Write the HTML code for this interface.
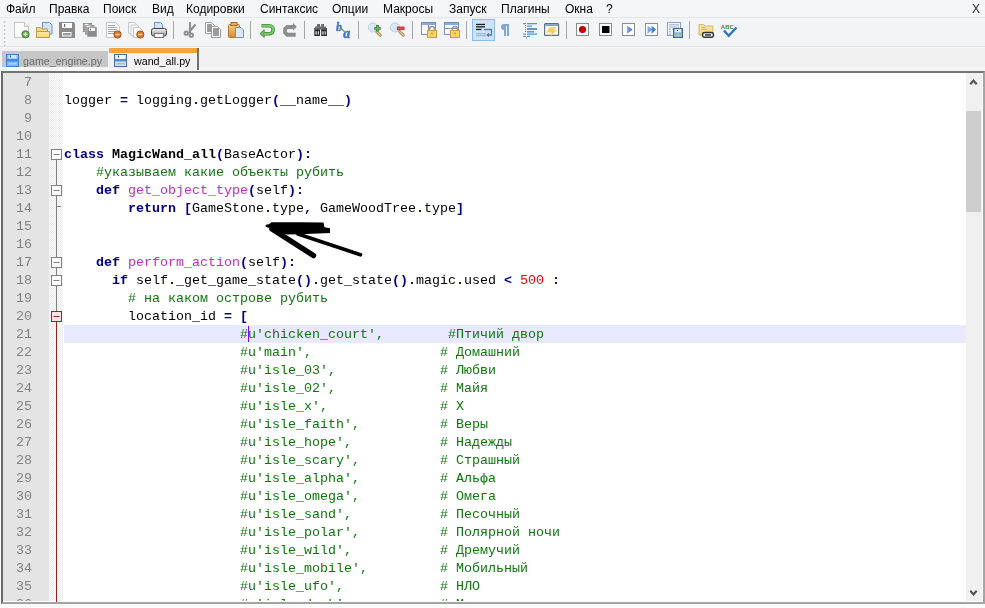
<!DOCTYPE html>
<html><head><meta charset="utf-8">
<style>
*{margin:0;padding:0;box-sizing:border-box}
html,body{width:985px;height:608px;overflow:hidden;background:#fbfbfb;font-family:"Liberation Sans",sans-serif;position:relative}
.a{position:absolute}
#menu{left:0;top:0;width:985px;height:18px;background:#f5f6f7;border-bottom:1px solid #e4e5e7}
#menu span{position:absolute;will-change:transform;top:2px;font-size:12px;color:#000;white-space:pre;line-height:14px}
#tool{left:0;top:18px;width:985px;height:29px;background:#f3f4f6;border-bottom:1px solid #e2e3e5}
#tabs{left:0;top:47px;width:985px;height:24px;background:#f0f0f0}
#frame{left:1px;top:71px;width:984px;height:533px;border-style:solid;border-width:2px;border-color:#747474 #a4a4a4 #a4a4a4 #6a6a6a;background:#fff;overflow:hidden}
#ln{left:0;top:0;width:46px;height:529px;background:#e4e4e4}
#fold{left:46px;top:0;width:14px;height:529px;background-color:#f8f8f8;background-image:conic-gradient(#ececec 25%,#fcfcfc 0 50%,#ececec 0 75%,#fcfcfc 0);background-size:2px 2px}
#sb{left:963px;top:0;width:16px;height:529px;background:#f0f0f0}
.code{position:absolute;will-change:transform;left:61px;height:18px;line-height:18px;font-family:"Liberation Mono",monospace;font-size:13.333px;white-space:pre;color:#000}
.num{position:absolute;will-change:transform;left:0;width:29px;text-align:right;height:18px;line-height:18px;font-family:"Liberation Mono",monospace;font-size:13.333px;color:#808080}
.k{color:#000080;font-weight:bold}
.o{color:#000080;font-weight:bold}
.c{color:#0c780c}
.f{color:#c828c8}
.cn{font-weight:bold}
.n{color:#ff0000}
.tab{position:absolute;will-change:transform;font-size:10.7px;line-height:12px;white-space:pre}
</style></head><body>
<div id="menu" class="a">
<span style="left:6px">Файл</span>
<span style="left:49px">Правка</span>
<span style="left:103px">Поиск</span>
<span style="left:152px">Вид</span>
<span style="left:186px">Кодировки</span>
<span style="left:260px">Синтаксис</span>
<span style="left:332px">Опции</span>
<span style="left:383px">Макросы</span>
<span style="left:449px">Запуск</span>
<span style="left:501px">Плагины</span>
<span style="left:565px">Окна</span>
<span style="left:606px">?</span>
<span style="left:972px;color:#2a2a2a">X</span>
</div>
<div id="tool" class="a"></div>
<svg class="a" style="left:0;top:0" width="985" height="47" viewBox="0 0 985 47">
<defs>
<linearGradient id="gpr" x1="0" y1="0" x2="0" y2="1"><stop offset="0" stop-color="#f2f2f2"/><stop offset="1" stop-color="#9a9a9a"/></linearGradient>
<linearGradient id="gpa" x1="0" y1="0" x2="0" y2="1"><stop offset="0" stop-color="#f7cf86"/><stop offset="1" stop-color="#d28a34"/></linearGradient>
<linearGradient id="gfo" x1="0" y1="0" x2="0" y2="1"><stop offset="0" stop-color="#fbeab0"/><stop offset="1" stop-color="#f3d46c"/></linearGradient>
<linearGradient id="gpl" x1="0" y1="0" x2="1" y2="0"><stop offset="0" stop-color="#8ab4ec"/><stop offset="1" stop-color="#2a64c4"/></linearGradient>
</defs>
<!-- grip -->
<g fill="#a8a8a8"><path d="M3.5,22.5L5,21L5.5,21.5L4,23Z"/><path d="M3.5,26.5L5,25L5.5,25.5L4,27Z"/><path d="M3.5,30.5L5,29L5.5,29.5L4,31Z"/><path d="M3.5,34.5L5,33L5.5,33.5L4,35Z"/><path d="M3.5,38.5L5,37L5.5,37.5L4,39Z"/><path d="M3.5,42.5L5,41L5.5,41.5L4,43Z"/><path d="M3.5,46.0L5,44.5L5.5,45.0L4,46.5Z"/></g>
<!-- new -->
<path d="M14.5,22.5H24.5L28.5,26.5V37.5H14.5Z" fill="#fff" stroke="#c4c4c4"/>
<path d="M24.5,22.5V26.5H28.5" fill="#eee" stroke="#c4c4c4"/>
<circle cx="25.5" cy="34.3" r="3.6" fill="#6aa55a" stroke="#3d7a33"/>
<path d="M23.4,34.3H27.6M25.5,32.2V36.4" stroke="#d8f0d0" stroke-width="1.3"/>
<!-- open -->
<path d="M42.5,22.5H49.5L52,25V34H42.5Z" fill="#d4e4f7" stroke="#6f93c4"/>
<path d="M36.5,27.5H40.5L41.5,29H47.5V37.5H36.5Z" fill="#f3dc90" stroke="#b99a4a"/>
<path d="M36.5,31.5H49.5V37.5H36.5Z" fill="url(#gfo)" stroke="#b99a4a"/>
<!-- save -->
<path d="M59,22H73.5L75,23.5V38H59Z" fill="#8a8a8a"/>
<rect x="62" y="23" width="10" height="5" fill="#fff"/><rect x="64" y="24" width="1.2" height="3" fill="#6a6a6a"/>
<rect x="62" y="32" width="9.5" height="4.5" fill="#fff"/><rect x="63" y="33" width="7.5" height="2.5" fill="#9a9a9a"/>
<!-- save all -->
<rect x="83" y="23" width="9" height="9" fill="#8a8a8a"/><rect x="84.5" y="23.8" width="4" height="1" fill="#fff"/>
<rect x="85" y="25" width="10" height="10" fill="#8a8a8a" stroke="#eee" stroke-width=".5"/><rect x="86.5" y="25.8" width="4" height="1" fill="#fff"/>
<rect x="87" y="27" width="10" height="10" fill="#8a8a8a" stroke="#eee" stroke-width=".5"/><rect x="89" y="28" width="6" height="3" fill="#fff"/><rect x="90" y="28.5" width="1" height="2" fill="#777"/>
<!-- close -->
<path d="M106.5,22.5H115.5L119.5,26.5V37.5H106.5Z" fill="#fff" stroke="#c4c4c4"/>
<path d="M108,25.5H115M108,27.5H117M108,29.5H117M108,31.5H115M108,33.5H114" stroke="#a4a4a4"/>
<circle cx="117.5" cy="34.5" r="3.6" fill="#dd7a2c" stroke="#a4501c"/>
<path d="M115.5,34.5H119.5" stroke="#fde0b0" stroke-width="1.3"/>
<!-- close all -->
<path d="M128.5,22.5H134.5L136.5,24.5V33.5H128.5Z" fill="#fff" stroke="#c4c4c4"/>
<path d="M131,25H137L139,27V35.5H131Z" fill="#fff" stroke="#c4c4c4"/>
<path d="M133.5,27.5H139.5L142.5,30.5V37.5H133.5Z" fill="#fff" stroke="#c4c4c4"/>
<circle cx="140.3" cy="34.5" r="3.6" fill="#dd7a2c" stroke="#a4501c"/>
<path d="M138.3,34.5H142.3" stroke="#fde0b0" stroke-width="1.3"/>
<!-- print -->
<path d="M154.5,22.5H160.5L162.5,24.5V29.5H154.5Z" fill="#d4e4f7" stroke="#6f93c4"/>
<rect x="151.5" y="28.5" width="15" height="7.5" rx="2" fill="url(#gpr)" stroke="#444"/>
<rect x="154.5" y="33.5" width="9" height="4" fill="#f4f4f4" stroke="#777"/>
<!-- separators -->
<g stroke="#a6a6a6"><path d="M173.5,21V39M250.5,21V39M304.5,21V39M358.5,21V39M412.5,21V39M466.5,21V39M566.5,21V39M689.5,21V39"/></g>
<!-- cut -->
<g fill="none" stroke="#8e8e8e">
<path d="M190,22V33" stroke-width="2"/><path d="M195.5,24.5L189.5,31.5" stroke-width="2.2"/>
<circle cx="186.3" cy="33.2" r="1.7" stroke-width="1.9"/><circle cx="191.3" cy="35.2" r="1.7" stroke-width="1.9"/></g>
<!-- copy -->
<path d="M205.5,22.5H211.5L214.5,25.5V33.5H205.5Z" fill="#fff" stroke="#9c9c9c"/>
<rect x="207" y="24" width="5" height="8" fill="#9c9c9c"/>
<path d="M211.5,26.5H217.5L220.5,29.5V37.5H211.5Z" fill="#fff" stroke="#9c9c9c"/>
<rect x="213" y="28" width="6" height="8" fill="#9c9c9c"/>
<!-- paste -->
<rect x="228.5" y="24.5" width="11" height="13" rx="1" fill="url(#gpa)" stroke="#b4782c"/>
<rect x="231" y="22.5" width="6" height="3" fill="#eab466" stroke="#a06a22"/>
<path d="M235.5,27.5H241L243.5,30V37.5H235.5Z" fill="#dce8f8" stroke="#7890b0"/>
<!-- undo -->
<path d="M261.5,25.8H269.2A4,4 0 0 1 269.2,33.8H263.5" fill="none" stroke="#3f8c36" stroke-width="3.6"/>
<path d="M260,33.6L264.2,29.8V37.4Z" fill="#74bc66" stroke="#3f8c36" stroke-width=".9" stroke-linejoin="round"/>
<path d="M262,25.8H269.2A4,4 0 0 1 269.2,33.8H263.8" fill="none" stroke="#80c872" stroke-width="2"/>
<!-- redo -->
<path d="M286.5,24.9H293V23.1L296.8,26.8L293,30.7V29H287.8L286.8,30V31.6L287.8,32.7H295.7V36.7H286.5L283.2,33.5V28.2Z" fill="#8c8c8c"/>
<!-- find -->
<g fill="#2c2c2c"><rect x="314.3" y="28" width="5.7" height="8"/><rect x="321.2" y="28" width="5.7" height="8"/></g>
<g fill="#6a6a6a"><rect x="317" y="24" width="3" height="4.5"/><rect x="321.2" y="24" width="2.8" height="4.5"/><rect x="315" y="26.5" width="11" height="3"/></g>
<g fill="#d0d0d0"><rect x="315.4" y="31.3" width="1.4" height="3.3"/><rect x="317.8" y="31.3" width="1.2" height="3.3"/><rect x="322.2" y="31.3" width="1.4" height="3.3"/><rect x="324.6" y="31.3" width="1.2" height="3.3"/></g>
<!-- replace -->
<text x="336" y="30.5" font-family="Liberation Serif" font-style="italic" font-weight="bold" font-size="12" fill="#4676c4" stroke="#4676c4" stroke-width=".4">b</text>
<path d="M340.5,28L344.5,31.5" stroke="#4aa050" stroke-width="1.3"/>
<text x="343.3" y="37.6" font-family="Liberation Serif" font-style="italic" font-weight="bold" font-size="14" fill="#4676c4" stroke="#4676c4" stroke-width=".5">a</text>
<!-- zoom in -->
<path d="M376.5,31.5L380.3,35.2" stroke="#9a7a48" stroke-width="2.8" stroke-linecap="round"/>
<path d="M376.5,31.5L380.3,35.2" stroke="#dcc490" stroke-width="1.4" stroke-linecap="round"/>
<circle cx="372.9" cy="27.5" r="4.5" fill="#dbe8f8" stroke="#b4c8e0" stroke-width="1"/>
<path d="M374.3,28.3H380.7M377.5,25.1V31.5" stroke="#3a7a34" stroke-width="2.8"/>
<path d="M375,28.3H380M377.5,25.8V30.8" stroke="#6cbc5a" stroke-width="1.3"/>
<!-- zoom out -->
<path d="M399.5,31.5L403.3,35.2" stroke="#9a7a48" stroke-width="2.8" stroke-linecap="round"/>
<path d="M399.5,31.5L403.3,35.2" stroke="#dcc490" stroke-width="1.4" stroke-linecap="round"/>
<circle cx="394.9" cy="27.5" r="4.5" fill="#dbe8f8" stroke="#b4c8e0" stroke-width="1"/>
<rect x="397.3" y="27" width="6.8" height="2.7" fill="#e05a5a" stroke="#a82828" stroke-width=".8"/>
<!-- sync v -->
<rect x="421.5" y="22.5" width="14" height="12" fill="#fff" stroke="#7a8ea8"/>
<rect x="422" y="23" width="13" height="2" fill="#8aaad8"/>
<path d="M428.5,25V34.5" stroke="#7a8ea8"/>
<path d="M429.5,31V29A2.5,2.5 0 0 1 434.5,29V31" stroke="#9a9a9a" stroke-width="1.6" fill="none"/>
<rect x="427.5" y="30.5" width="9" height="7" fill="#f5d26e" stroke="#c6a040"/>
<rect x="431.5" y="32.5" width="1" height="2" fill="#a88020"/>
<!-- sync h -->
<rect x="444.5" y="22.5" width="14" height="12" fill="#fff" stroke="#7a8ea8"/>
<rect x="445" y="23" width="13" height="2" fill="#8aaad8"/>
<path d="M445,28.5H458" stroke="#7a8ea8"/>
<path d="M452.5,31V29A2.5,2.5 0 0 1 457.5,29V31" stroke="#9a9a9a" stroke-width="1.6" fill="none"/>
<rect x="450.5" y="30.5" width="9" height="7" fill="#f5d26e" stroke="#c6a040"/>
<rect x="454.5" y="32.5" width="1" height="2" fill="#a88020"/>
<!-- wrap pressed -->
<rect x="472.5" y="19.5" width="22" height="21" fill="#cce4f7" stroke="#8cbcea"/>
<g fill="#1c1c1c"><rect x="476" y="23.8" width="9" height="1.3"/><rect x="476" y="26.2" width="9" height="1.3"/><rect x="476" y="28.8" width="5.5" height="1.3"/></g>
<path d="M484,29.5H491.5V35H488" stroke="#5a7aa0" stroke-width="1.3" fill="none"/>
<path d="M486,35L489,32.8V37.2Z" fill="#5a7aa0"/>
<g fill="#9fb6cc"><rect x="476" y="33" width="10" height="1.2"/><rect x="476" y="35" width="10" height="1.2"/></g>
<!-- pilcrow -->
<path d="M509,24H504A3,3 0 0 0 504,30V36H506V26H507V36H509Z" fill="#7ea6d8"/>
<!-- indent guide -->
<g fill="#5a98cc"><rect x="527" y="23" width="10" height="1.3"/><rect x="527" y="25.5" width="5" height="1.3"/><rect x="527" y="28" width="10" height="2"/><rect x="527" y="31" width="7" height="1.6"/><rect x="527" y="33.5" width="10" height="1.3"/><rect x="523" y="23" width="3" height="1.2"/><rect x="523" y="33.5" width="3" height="1.2"/><rect x="523" y="35.8" width="3" height="1.2"/><rect x="527" y="35.8" width="3" height="1.2"/><rect x="526" y="37.3" width="1" height="1"/></g>
<g fill="#d04040"><rect x="525" y="25" width="1" height="1"/><rect x="525" y="27" width="1" height="1"/><rect x="525" y="29" width="1" height="1"/><rect x="525" y="31" width="1" height="1"/></g>
<!-- udl -->
<rect x="544.6" y="23.6" width="14" height="11.8" rx="1" fill="#fffaea" stroke="#5e6e84" stroke-width="1.2"/>
<rect x="545.2" y="24.2" width="12.8" height="1.8" fill="#7c9cc4"/>
<path d="M549.5,27.3H556.5L553.8,30H557L550.3,36.8L551.5,32.6H546.5Z" fill="#f0cf6a"/>
<!-- record / stop / play -->
<g fill="#fff" stroke="#8c8c8c"><rect x="576.5" y="23.5" width="12" height="12"/><rect x="599.5" y="23.5" width="12" height="12"/><rect x="622.5" y="23.5" width="12" height="12"/><rect x="645.5" y="23.5" width="12" height="12"/></g>
<circle cx="582.5" cy="29.5" r="3.6" fill="#c00000"/>
<rect x="602" y="26" width="7.5" height="7" fill="#000"/>
<path d="M627,25.5L632.5,29.5L627,34Z" fill="url(#gpl)"/>
<path d="M647.5,25.5L652,29.5L647.5,34ZM651.5,25.5L656,29.5L651.5,34Z" fill="url(#gpl)"/>
<!-- save macro -->
<rect x="667.5" y="22.5" width="13" height="13" fill="#f4f7fb" stroke="#8aa0bc"/>
<path d="M669,24.8H679M669,27H679" stroke="#9ab0cc"/>
<g fill="#b0c4dc"><rect x="669" y="28.5" width="2" height="1.5"/><rect x="672" y="28.5" width="1.5" height="1.5"/><rect x="669" y="31" width="2" height="1.5"/><rect x="669" y="33.5" width="2" height="1.5"/></g>
<rect x="673.5" y="28.5" width="9" height="9" fill="#8fb0d8" stroke="#46688e" stroke-width="1"/>
<rect x="675" y="29.3" width="6" height="3" fill="#f4f8fc"/><rect x="677" y="30" width="1" height="1" fill="#333"/>
<rect x="675.5" y="34.3" width="5" height="2" fill="#a8d890"/>
<!-- folder link -->
<path d="M699,24.5H703.5L705,26H712.8V35H699Z" fill="url(#gfo)" stroke="#d0b060" stroke-width=".9"/>
<path d="M701,27.5H705.5M701,29.5H707" stroke="#f0a878" stroke-width="1.1"/>
<rect x="702.5" y="32.5" width="11" height="4.8" rx="2.2" fill="#f4f4f4" stroke="#333" stroke-width="1.4"/>
<rect x="705" y="34.2" width="6" height="1.5" fill="#333"/>
<!-- spell -->
<text x="720.8" y="28.6" font-family="Liberation Sans" font-weight="bold" font-size="6.2" textLength="13" lengthAdjust="spacingAndGlyphs" fill="#3a8a4a">ABC</text>
<path d="M724,30.5L728.6,35.8L736.5,27.5" stroke="#2a78c4" stroke-width="2.4" fill="none"/>
</svg>

<div id="tabs" class="a"></div>
<div class="a" style="left:2px;top:51px;width:106px;height:16px;background:#c6c6c6"></div>
<div class="a" style="left:0;top:67px;width:985px;height:4px;background:#f6f6f6"></div>
<div class="a" style="left:0;top:47px;width:985px;height:1px;background:#f7f7f7"></div>
<div class="a" style="left:109px;top:48px;width:90px;height:22px;background:#f2f2f2;border-right:2px solid #707070"></div>
<div class="a" style="left:109px;top:48px;width:88px;height:4.5px;background:#f5a540"></div>
<div class="tab" style="left:23px;top:55px;color:#6b6b6b">game_engine.py</div>
<div class="tab" style="left:134px;top:55px;color:#000">wand_all.py</div>
<svg class="a" style="left:0;top:47px" width="140" height="24" viewBox="0 47 140 24">
<rect x="6.5" y="54.5" width="12" height="12" fill="#80b8f2" stroke="#4080d0"/>
<rect x="8.5" y="55" width="8" height="3.5" fill="#cfe4fb"/><rect x="10" y="55.5" width="1" height="2" fill="#2a5aa0"/>
<rect x="7" y="59" width="11" height="2.5" fill="#4a8ae0"/><rect x="8.5" y="63" width="8" height="1.5" fill="#a8d0f8"/>
<rect x="114.5" y="54.5" width="12" height="12" fill="#d0e0f5" stroke="#4a6aa0"/>
<rect x="116.5" y="55" width="8" height="3.5" fill="#fff"/><rect x="118" y="55.5" width="1" height="2" fill="#333"/>
<rect x="115" y="59" width="11" height="2.5" fill="#5a8ad0"/><rect x="116.5" y="63" width="8" height="1.5" fill="#90d090"/>
</svg>
<div id="frame" class="a">
<div id="ln" class="a"></div>
<div id="fold" class="a"></div>
<div class="a" style="left:61px;top:252px;width:902px;height:18px;background:#e8e8ff"></div>
<div class="num" style="top:1px">7</div>
<div class="num" style="top:19px">8</div>
<div class="num" style="top:37px">9</div>
<div class="num" style="top:55px">10</div>
<div class="num" style="top:73px">11</div>
<div class="num" style="top:91px">12</div>
<div class="num" style="top:109px">13</div>
<div class="num" style="top:127px">14</div>
<div class="num" style="top:145px">15</div>
<div class="num" style="top:163px">16</div>
<div class="num" style="top:181px">17</div>
<div class="num" style="top:199px">18</div>
<div class="num" style="top:217px">19</div>
<div class="num" style="top:235px">20</div>
<div class="num" style="top:253px">21</div>
<div class="num" style="top:271px">22</div>
<div class="num" style="top:289px">23</div>
<div class="num" style="top:307px">24</div>
<div class="num" style="top:325px">25</div>
<div class="num" style="top:343px">26</div>
<div class="num" style="top:361px">27</div>
<div class="num" style="top:379px">28</div>
<div class="num" style="top:397px">29</div>
<div class="num" style="top:415px">30</div>
<div class="num" style="top:433px">31</div>
<div class="num" style="top:451px">32</div>
<div class="num" style="top:469px">33</div>
<div class="num" style="top:487px">34</div>
<div class="num" style="top:505px">35</div>
<div class="num" style="top:523px">36</div>
<div class="code" style="top:19px">logger <span class="o">=</span> logging<span class="o">.</span>getLogger<span class="o">(</span>__name__<span class="o">)</span></div>
<div class="code" style="top:73px"><span class="k">class</span> <span class="cn">MagicWand_all</span><span class="o">(</span>BaseActor<span class="o">):</span></div>
<div class="code" style="top:91px">    <span class="c">#указываем какие объекты рубить</span></div>
<div class="code" style="top:109px">    <span class="k">def</span> <span class="f">get_object_type</span><span class="o">(</span>self<span class="o">):</span></div>
<div class="code" style="top:127px">        <span class="k">return</span> <span class="o">[</span>GameStone<span class="o">.</span>type<span class="o">,</span> GameWoodTree<span class="o">.</span>type<span class="o">]</span></div>
<div class="code" style="top:181px">    <span class="k">def</span> <span class="f">perform_action</span><span class="o">(</span>self<span class="o">):</span></div>
<div class="code" style="top:199px">      <span class="k">if</span> self<span class="o">.</span>_get_game_state<span class="o">().</span>get_state<span class="o">().</span>magic<span class="o">.</span>used <span class="o">&lt;</span> <span class="n">500</span> <span class="o">:</span></div>
<div class="code" style="top:217px">        <span class="c"># на каком острове рубить</span></div>
<div class="code" style="top:235px">        location_id <span class="o">=</span> <span class="o">[</span></div>
<div class="code" style="top:253px">                      <span class="c">#u&#x27;chicken_court&#x27;,        #Птичий двор</span></div>
<div class="code" style="top:271px">                      <span class="c">#u&#x27;main&#x27;,                # Домашний</span></div>
<div class="code" style="top:289px">                      <span class="c">#u&#x27;isle_03&#x27;,             # Любви</span></div>
<div class="code" style="top:307px">                      <span class="c">#u&#x27;isle_02&#x27;,             # Майя</span></div>
<div class="code" style="top:325px">                      <span class="c">#u&#x27;isle_x&#x27;,              # X</span></div>
<div class="code" style="top:343px">                      <span class="c">#u&#x27;isle_faith&#x27;,          # Веры</span></div>
<div class="code" style="top:361px">                      <span class="c">#u&#x27;isle_hope&#x27;,           # Надежды</span></div>
<div class="code" style="top:379px">                      <span class="c">#u&#x27;isle_scary&#x27;,          # Страшный</span></div>
<div class="code" style="top:397px">                      <span class="c">#u&#x27;isle_alpha&#x27;,          # Альфа</span></div>
<div class="code" style="top:415px">                      <span class="c">#u&#x27;isle_omega&#x27;,          # Омега</span></div>
<div class="code" style="top:433px">                      <span class="c">#u&#x27;isle_sand&#x27;,           # Песочный</span></div>
<div class="code" style="top:451px">                      <span class="c">#u&#x27;isle_polar&#x27;,          # Полярной ночи</span></div>
<div class="code" style="top:469px">                      <span class="c">#u&#x27;isle_wild&#x27;,           # Дремучий</span></div>
<div class="code" style="top:487px">                      <span class="c">#u&#x27;isle_mobile&#x27;,         # Мобильный</span></div>
<div class="code" style="top:505px">                      <span class="c">#u&#x27;isle_ufo&#x27;,            # НЛО</span></div>
<div class="code" style="top:523px">                      <span class="c">#u&#x27;isle_dark&#x27;,           # Мрака</span></div>
<div id="sb" class="a"></div>
</div>
<svg class="a" style="left:0;top:0" width="985" height="608" viewBox="0 0 985 608">
<!-- frame bottom/right inner highlight -->
<path d="M3,601.5H983M982.5,73V602" stroke="#fff" stroke-width="1"/>
<!-- folding -->
<path d="M56.5,159.5V311.5" stroke="#808080"/>
<path d="M56.5,206.5H61" stroke="#808080"/>
<path d="M56.5,321.5V602" stroke="#9a2020"/>
<g fill="#fff" stroke="#808080">
<rect x="51.5" y="149.5" width="10" height="10"/>
<rect x="51.5" y="185.5" width="10" height="10"/>
<rect x="51.5" y="257.5" width="10" height="10"/>
<rect x="51.5" y="275.5" width="10" height="10"/>
</g>
<path d="M53.5,154.5H59.5M53.5,190.5H59.5M53.5,262.5H59.5M53.5,280.5H59.5" stroke="#808080"/>
<rect x="51.5" y="311.5" width="10" height="10" fill="#ffe2e8" stroke="#8c2a2a"/>
<path d="M53.5,316.5H59.5" stroke="#8c2a2a"/>
<!-- caret -->
<rect x="248" y="326" width="1" height="16" fill="#8000ff"/>
<!-- scrollbar -->
<path d="M970.3,84.3L973.5,80.6L976.7,84.3" stroke="#505050" stroke-width="2.1" fill="none"/>
<rect x="966" y="111" width="15" height="101" fill="#cdcdcd"/>
<path d="M970.3,590.7L973.5,594.4L976.7,590.7" stroke="#505050" stroke-width="2.1" fill="none"/>
<!-- arrow -->
<path d="M265.5,225.5Q266,224.3 269,224.2L271.5,222.3L300,222.3L323.5,222.6L324.5,227.3L330,228.3L330,233L318,233.6L300,234.2L287,234.5L279,232.5L269,227.8Q265.5,227.5 265.5,225.5Z" fill="#000"/>
<path d="M272,229L313.5,255.5" stroke="#000" stroke-width="5.5" stroke-linecap="round"/>
<path d="M298,234L360.5,254.8" stroke="#000" stroke-width="3.6" stroke-linecap="round"/>
</svg>
</body></html>
